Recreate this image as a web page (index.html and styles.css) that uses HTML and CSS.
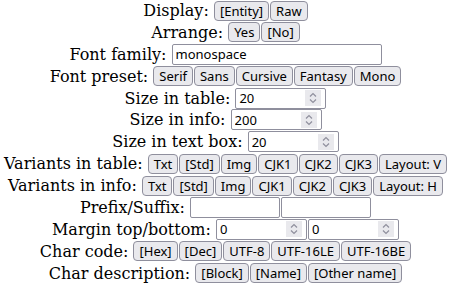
FILE: index.html
```html
<!DOCTYPE html>
<html lang="en">
<head>
  <meta charset="UTF-8">
  <title>Settings</title>
  <link rel="stylesheet" href="styles.css">
</head>
<body>

  <div class="settings">
    <div class="row">
      <span class="label">Display:</span>
      <span class="group"><button>[Entity]</button><button>Raw</button></span>
    </div>
    <div class="row">
      <span class="label">Arrange:</span>
      <span class="group"><button>Yes</button><button>[No]</button></span>
    </div>
    <div class="row">
      <span class="label">Font family:</span>
      <input type="text" class="text wide" value="monospace">
    </div>
    <div class="row">
      <span class="label">Font preset:</span>
      <span class="group"><button>Serif</button><button>Sans</button><button>Cursive</button><button>Fantasy</button><button>Mono</button></span>
    </div>
    <div class="row">
      <span class="label">Size in table:</span>
      <span class="num"><input type="text" value="20"><span class="spin"><svg viewBox="0 0 16 16"><path d="M5 6.5 8 3.5 11 6.5M5 9.5 8 12.5 11 9.5"/></svg></span></span>
    </div>
    <div class="row">
      <span class="label">Size in info:</span>
      <span class="num"><input type="text" value="200"><span class="spin"><svg viewBox="0 0 16 16"><path d="M5 6.5 8 3.5 11 6.5M5 9.5 8 12.5 11 9.5"/></svg></span></span>
    </div>
    <div class="row">
      <span class="label">Size in text box:</span>
      <span class="num"><input type="text" value="20"><span class="spin"><svg viewBox="0 0 16 16"><path d="M5 6.5 8 3.5 11 6.5M5 9.5 8 12.5 11 9.5"/></svg></span></span>
    </div>
    <div class="row">
      <span class="label">Variants in table:</span>
      <span class="group"><button>Txt</button><button>[Std]</button><button>Img</button><button>CJK1</button><button>CJK2</button><button>CJK3</button><button>Layout: V</button></span>
    </div>
    <div class="row">
      <span class="label">Variants in info:</span>
      <span class="group"><button>Txt</button><button>[Std]</button><button>Img</button><button>CJK1</button><button>CJK2</button><button>CJK3</button><button>Layout: H</button></span>
    </div>
    <div class="row">
      <span class="label">Prefix/Suffix:</span>
      <span class="group"><input type="text" class="text"><input type="text" class="text"></span>
    </div>
    <div class="row">
      <span class="label">Margin top/bottom:</span>
      <span class="group"><span class="num"><input type="text" value="0"><span class="spin"><svg viewBox="0 0 16 16"><path d="M5 6.5 8 3.5 11 6.5M5 9.5 8 12.5 11 9.5"/></svg></span></span><span class="num"><input type="text" value="0"><span class="spin"><svg viewBox="0 0 16 16"><path d="M5 6.5 8 3.5 11 6.5M5 9.5 8 12.5 11 9.5"/></svg></span></span></span>
    </div>
    <div class="row">
      <span class="label">Char code:</span>
      <span class="group"><button>[Hex]</button><button>[Dec]</button><button>UTF-8</button><button>UTF-16LE</button><button>UTF-16BE</button></span>
    </div>
    <div class="row">
      <span class="label">Char description:</span>
      <span class="group"><button>[Block]</button><button>[Name]</button><button>[Other name]</button></span>
    </div>
  </div>

</body>
</html>
```

FILE: styles.css
```css
html, body {
  margin: 0;
  padding: 0;
  background: #fff;
}

body {
  font-family: "DejaVu Serif", serif;
  font-size: 16px;
  color: #000;
}

.row {
  text-align: center;
  height: 21.9px;
  white-space: nowrap;
}

.label {
  vertical-align: middle;
}

.group {
  display: inline-flex;
  gap: 1px;
  vertical-align: middle;
}

button {
  font-family: "Noto Sans", sans-serif;
  font-size: 13px;
  color: #000;
  background: #e9e9ed;
  border: 1px solid #8f8f9d;
  border-radius: 4px;
  height: 20px;
  padding: 0 5px;
  margin: 0;
}

input {
  font-family: "Noto Sans", sans-serif;
  font-size: 13px;
  color: #000;
  margin: 0;
  outline: none;
}

.text {
  width: 90px;
  height: 21px;
  box-sizing: border-box;
  border: 1px solid #8f8f9d;
  border-radius: 2px;
  padding: 1px 3px;
  vertical-align: middle;
}

.text.wide {
  width: 210px;
}

.num {
  display: inline-flex;
  align-items: center;
  width: 91px;
  height: 21px;
  box-sizing: border-box;
  border: 1px solid #8f8f9d;
  border-radius: 2px;
  padding: 0 4px 0 3px;
  background: #fff;
  vertical-align: middle;
}

.num input {
  flex: 1;
  min-width: 0;
  border: none;
  padding: 0;
}

.spin {
  width: 16px;
  height: 16px;
  background: #e9e9ed;
  display: flex;
}

.spin svg {
  width: 16px;
  height: 16px;
  fill: none;
  stroke: #8f8f9d;
  stroke-width: 1.2;
}
```
